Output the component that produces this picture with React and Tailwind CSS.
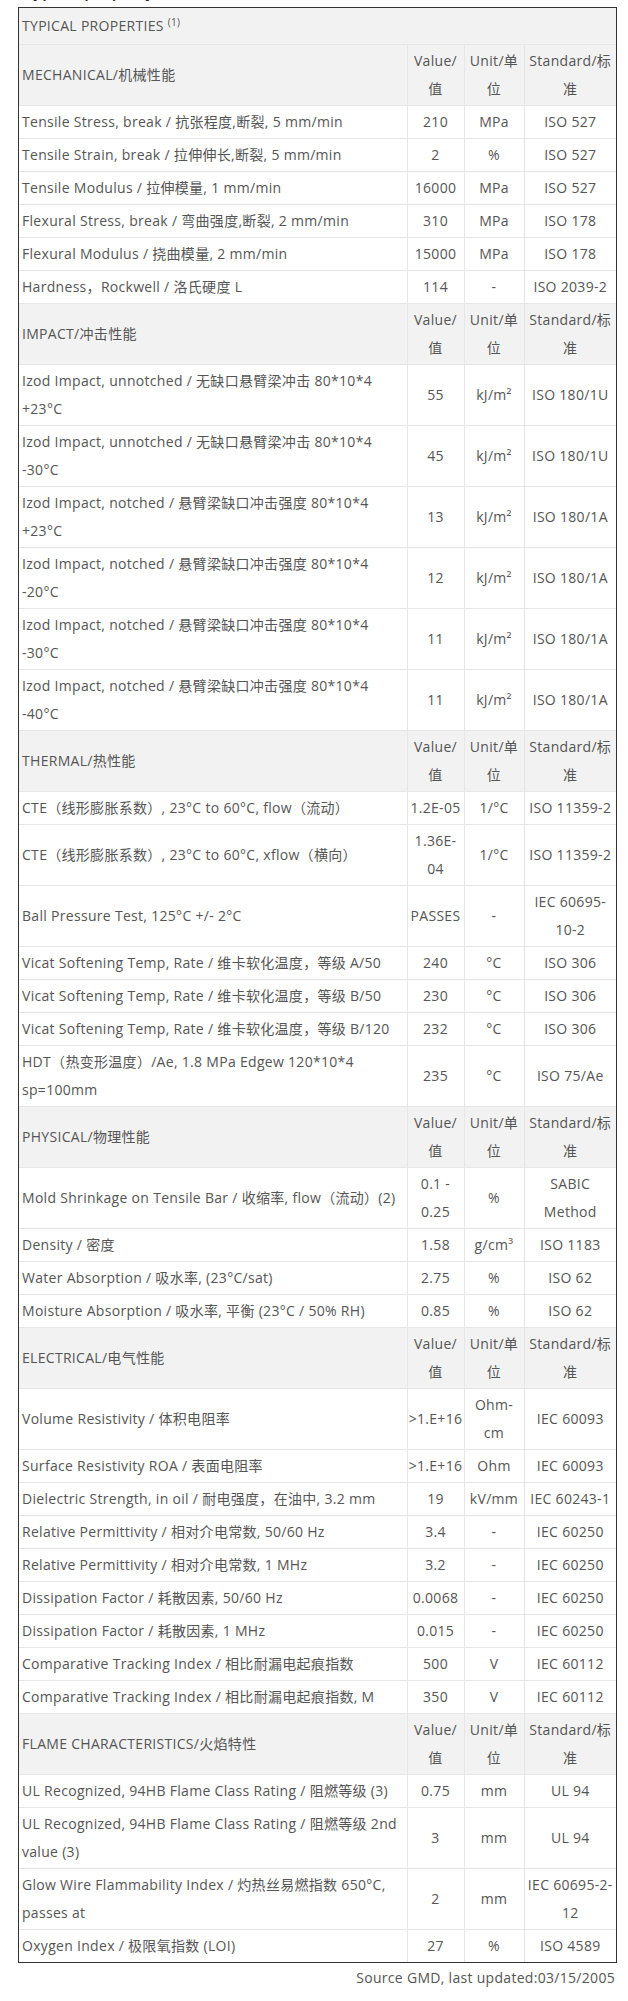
import React from 'react';

const FONT = { fontFamily: '"Open Sans", "Noto Sans CJK SC", sans-serif' };

const SECTIONS = [
  {
    title: 'MECHANICAL/机械性能',
    rows: [
      ['Tensile Stress, break / 抗张程度,断裂, 5 mm/min', '210', 'MPa', 'ISO 527'],
      ['Tensile Strain, break / 拉伸伸长,断裂, 5 mm/min', '2', '%', 'ISO 527'],
      ['Tensile Modulus / 拉伸模量, 1 mm/min', '16000', 'MPa', 'ISO 527'],
      ['Flexural Stress, break / 弯曲强度,断裂, 2 mm/min', '310', 'MPa', 'ISO 178'],
      ['Flexural Modulus / 挠曲模量, 2 mm/min', '15000', 'MPa', 'ISO 178'],
      ['Hardness，Rockwell / 洛氏硬度 L', '114', '-', 'ISO 2039-2'],
    ],
  },
  {
    title: 'IMPACT/冲击性能',
    rows: [
      ['Izod Impact, unnotched / 无缺口悬臂梁冲击 80*10*4\n+23°C', '55', 'kJ/m²', 'ISO 180/1U'],
      ['Izod Impact, unnotched / 无缺口悬臂梁冲击 80*10*4\n-30°C', '45', 'kJ/m²', 'ISO 180/1U'],
      ['Izod Impact, notched / 悬臂梁缺口冲击强度 80*10*4\n+23°C', '13', 'kJ/m²', 'ISO 180/1A'],
      ['Izod Impact, notched / 悬臂梁缺口冲击强度 80*10*4\n-20°C', '12', 'kJ/m²', 'ISO 180/1A'],
      ['Izod Impact, notched / 悬臂梁缺口冲击强度 80*10*4\n-30°C', '11', 'kJ/m²', 'ISO 180/1A'],
      ['Izod Impact, notched / 悬臂梁缺口冲击强度 80*10*4\n-40°C', '11', 'kJ/m²', 'ISO 180/1A'],
    ],
  },
  {
    title: 'THERMAL/热性能',
    rows: [
      ['CTE（线形膨胀系数）, 23°C to 60°C, flow（流动）', '1.2E-05', '1/°C', 'ISO 11359-2'],
      ['CTE（线形膨胀系数）, 23°C to 60°C, xflow（横向）', '1.36E-\n04', '1/°C', 'ISO 11359-2'],
      ['Ball Pressure Test, 125°C +/- 2°C', 'PASSES', '-', 'IEC 60695-\n10-2'],
      ['Vicat Softening Temp, Rate / 维卡软化温度，等级 A/50', '240', '°C', 'ISO 306'],
      ['Vicat Softening Temp, Rate / 维卡软化温度，等级 B/50', '230', '°C', 'ISO 306'],
      ['Vicat Softening Temp, Rate / 维卡软化温度，等级 B/120', '232', '°C', 'ISO 306'],
      ['HDT（热变形温度）/Ae, 1.8 MPa Edgew 120*10*4\nsp=100mm', '235', '°C', 'ISO 75/Ae'],
    ],
  },
  {
    title: 'PHYSICAL/物理性能',
    rows: [
      ['Mold Shrinkage on Tensile Bar / 收缩率, flow（流动）(2)', '0.1 -\n0.25', '%', 'SABIC\nMethod'],
      ['Density / 密度', '1.58', 'g/cm³', 'ISO 1183'],
      ['Water Absorption / 吸水率, (23°C/sat)', '2.75', '%', 'ISO 62'],
      ['Moisture Absorption / 吸水率, 平衡 (23°C / 50% RH)', '0.85', '%', 'ISO 62'],
    ],
  },
  {
    title: 'ELECTRICAL/电气性能',
    rows: [
      ['Volume Resistivity / 体积电阻率', '>1.E+16', 'Ohm-\ncm', 'IEC 60093'],
      ['Surface Resistivity ROA / 表面电阻率', '>1.E+16', 'Ohm', 'IEC 60093'],
      ['Dielectric Strength, in oil / 耐电强度，在油中, 3.2 mm', '19', 'kV/mm', 'IEC 60243-1'],
      ['Relative Permittivity / 相对介电常数, 50/60 Hz', '3.4', '-', 'IEC 60250'],
      ['Relative Permittivity / 相对介电常数, 1 MHz', '3.2', '-', 'IEC 60250'],
      ['Dissipation Factor / 耗散因素, 50/60 Hz', '0.0068', '-', 'IEC 60250'],
      ['Dissipation Factor / 耗散因素, 1 MHz', '0.015', '-', 'IEC 60250'],
      ['Comparative Tracking Index / 相比耐漏电起痕指数', '500', 'V', 'IEC 60112'],
      ['Comparative Tracking Index / 相比耐漏电起痕指数, M', '350', 'V', 'IEC 60112'],
    ],
  },
  {
    title: 'FLAME CHARACTERISTICS/火焰特性',
    rows: [
      ['UL Recognized, 94HB Flame Class Rating / 阻燃等级 (3)', '0.75', 'mm', 'UL 94'],
      ['UL Recognized, 94HB Flame Class Rating / 阻燃等级 2nd\nvalue (3)', '3', 'mm', 'UL 94'],
      ['Glow Wire Flammability Index / 灼热丝易燃指数 650°C,\npasses at', '2', 'mm', 'IEC 60695-2-\n12'],
      ['Oxygen Index / 极限氧指数 (LOI)', '27', '%', 'ISO 4589'],
    ],
  },
];

const cell = 'border border-[#e6e6e6] py-[2px] leading-[28px] whitespace-pre align-middle';

function SectionRows({ section }) {
  return (
    <>
      <tr className="bg-[#f2f2f2]">
        <td className={`${cell} px-[3px] text-left`}>{section.title}</td>
        <td className={`${cell} text-center`}>{'Value/\n值'}</td>
        <td className={`${cell} text-center`}>{'Unit/单\n位'}</td>
        <td className={`${cell} text-center`}>{'Standard/标\n准'}</td>
      </tr>
      {section.rows.map((r, i) => (
        <tr key={i} className="bg-white">
          <td className={`${cell} px-[3px] text-left`}>{r[0]}</td>
          <td className={`${cell} text-center`}>{r[1]}</td>
          <td className={`${cell} text-center`}>{r[2]}</td>
          <td className={`${cell} text-center`}>{r[3]}</td>
        </tr>
      ))}
    </>
  );
}

export default function App() {
  return (
    <div className="min-h-[2001px] w-[628px] bg-white text-[14px] tracking-[0.3px] text-[#555]" style={FONT}>
      {/* heading above the table, scrolled mostly out of view */}
      <div className="h-[7px] overflow-hidden pl-[24px] text-[16px] font-semibold leading-[24px] text-[#222]">
        <div className="-mt-[21px]">Typical property</div>
      </div>
      <div className="ml-[18px] w-[599px] border border-[#333]">
        <table className="w-full table-fixed border-collapse border-hidden">
          <colgroup>
            <col className="w-[388px]" />
            <col className="w-[57px]" />
            <col className="w-[60px]" />
            <col />
          </colgroup>
          <tbody>
            <tr className="bg-[#f2f2f2]">
              <td colSpan={4} className="border border-[#e6e6e6] px-[3px] py-[4px] leading-[28px]">
                TYPICAL PROPERTIES <sup className="text-[10px]">(1)</sup>
              </td>
            </tr>
            {SECTIONS.map((s) => (
              <SectionRows key={s.title} section={s} />
            ))}
          </tbody>
        </table>
      </div>
      <div className="w-[615px] pt-[3px] text-right leading-[24px]">Source GMD, last updated:03/15/2005</div>
    </div>
  );
}
